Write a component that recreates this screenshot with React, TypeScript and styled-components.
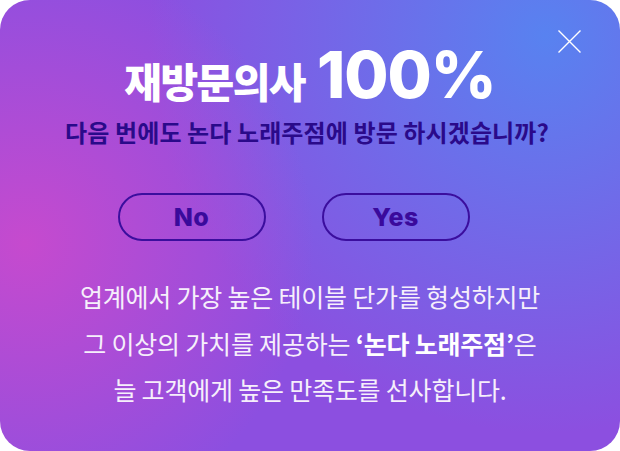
import React from "react";
import styled, { createGlobalStyle } from "styled-components";

const GlobalStyle = createGlobalStyle`
  * { box-sizing: border-box; }
  body {
    margin: 0;
    background: #ffffff;
    font-family: "Noto Sans CJK KR", "Noto Sans", sans-serif;
  }
`;

const Card = styled.div`
  position: relative;
  width: 620px;
  height: 451px;
  border-radius: 30px;
  overflow: hidden;
  background:
    radial-gradient(circle at 4% 54%, rgba(198, 74, 206, 1) 0%, rgba(198, 74, 206, 0) 45%),
    radial-gradient(circle at 88% 8%, rgba(88, 130, 240, 1) 0%, rgba(88, 130, 240, 0) 58%),
    #8c4fe0;
  display: flex;
  flex-direction: column;
  align-items: center;
  padding-top: 45px;
`;

const CloseButton = styled.button`
  position: absolute;
  top: 29px;
  right: 38px;
  width: 25px;
  height: 25px;
  padding: 0;
  border: none;
  background: none;
  cursor: pointer;
  display: flex;
  align-items: center;
  justify-content: center;
`;

const Title = styled.h1`
  margin: 0;
  display: flex;
  align-items: baseline;
  gap: 12px;
  color: #ffffff;
  line-height: 60px;
`;

const TitleKo = styled.span`
  font-family: "Noto Sans CJK KR", sans-serif;
  font-weight: 900;
  font-size: 41px;
  letter-spacing: -1.6px;
`;

const TitleNum = styled.span`
  font-family: Inter, "Noto Sans", sans-serif;
  font-weight: 800;
  font-size: 64px;
  letter-spacing: -1px;
`;

const Question = styled.p`
  margin: 7px 0 0 -6px;
  font-family: "Noto Sans CJK KR", sans-serif;
  font-weight: 700;
  font-size: 24px;
  letter-spacing: 0.1px;
  line-height: 30px;
  color: #2a0a8a;
`;

const ButtonRow = styled.div`
  display: flex;
  gap: 56px;
  margin: 46px 33px 0 0;
`;

const ChoiceButton = styled.button`
  width: 148px;
  height: 48px;
  border: 2px solid #3b0e9e;
  border-radius: 24px;
  background: transparent;
  font-family: Inter, "Noto Sans", sans-serif;
  font-weight: 800;
  font-size: 25px;
  letter-spacing: 0.5px;
  color: #3a0a9c;
  cursor: pointer;
  display: flex;
  align-items: center;
  justify-content: center;
`;

const Description = styled.p`
  margin: 32px 0 0;
  text-align: center;
  font-family: "Noto Sans CJK KR", sans-serif;
  font-weight: 400;
  font-size: 25px;
  line-height: 46.5px;
  letter-spacing: -0.2px;
  color: #f6effb;
`;

const Strong = styled.strong`
  font-weight: 700;
  color: #ffffff;
`;

export default function App() {
  return (
    <>
      <GlobalStyle />
      <Card>
        <CloseButton aria-label="닫기">
          <svg width="25" height="25" viewBox="0 0 25 25">
            <path d="M1.5 1.5 L23.5 23.5 M23.5 1.5 L1.5 23.5" stroke="#ffffff" strokeWidth="1.4" fill="none" />
          </svg>
        </CloseButton>
        <Title>
          <TitleKo>재방문의사</TitleKo>
          <TitleNum>100%</TitleNum>
        </Title>
        <Question>다음 번에도 논다 노래주점에 방문 하시겠습니까?</Question>
        <ButtonRow>
          <ChoiceButton>No</ChoiceButton>
          <ChoiceButton>Yes</ChoiceButton>
        </ButtonRow>
        <Description>
          업계에서 가장 높은 테이블 단가를 형성하지만
          <br />
          그 이상의 가치를 제공하는 <Strong>‘논다 노래주점’</Strong>은
          <br />
          늘 고객에게 높은 만족도를 선사합니다.
        </Description>
      </Card>
    </>
  );
}
